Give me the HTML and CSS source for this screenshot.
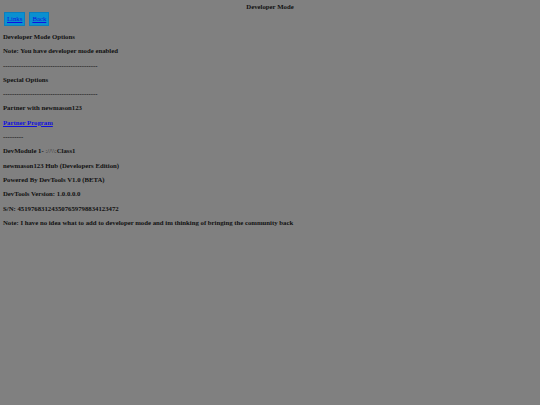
FILE: index.html
```html
<!DOCTYPE html>
<html>
<head>
<meta charset="utf-8">
<link rel="stylesheet" href="styles.css">
</head>
<body>
<div class="title">Developer Mode</div>
<div class="nav">
  <span class="btn"><a href="#">Links</a></span>
  <span class="btn"><a href="#">Back</a></span>
</div>
<p>Developer Mode Options</p>
<p>Note: You have developer mode enabled</p>
<p>------------------------------------------</p>
<p>Special Options</p>
<p>------------------------------------------</p>
<p>Partner with newmason123</p>
<p><a href="#">Partner Program</a></p>
<p>---------</p>
<p>DevModule 1- <span class="dim">://\\:</span>Class1</p>
<p>newmason123 Hub (Developers Edition)</p>
<p>Powered By DevTools V1.0 (BETA)</p>
<p>DevTools Version: 1.0.0.0.0</p>
<p>S/N: 451976831243507659798834123472</p>
<p>Note: I have no idea what to add to developer mode and im thinking of bringing the community back</p>
</body>
</html>
```

FILE: styles.css
```css
html, body {
  background: #808080;
}
body {
  margin: 0;
  padding: 0 3px;
  font-family: "Liberation Serif", "Times New Roman", serif;
  font-size: 6.75px;
  font-weight: bold;
  color: #111;
  line-height: 8px;
}
.title {
  text-align: center;
  padding-top: 3px;
}
.nav {
  display: flex;
  gap: 4px;
  margin-top: 1px;
  margin-bottom: 7px;
  padding-left: 1px;
}
.btn {
  background: #0b90d0;
  border: 1px solid #0a7fbf;
  padding: 2px 2px;
  font-weight: normal;
}
a {
  color: #1010dd;
}
p {
  margin: 6.3px 0;
}
.dim {
  font-weight: normal;
  color: #333;
}
```
